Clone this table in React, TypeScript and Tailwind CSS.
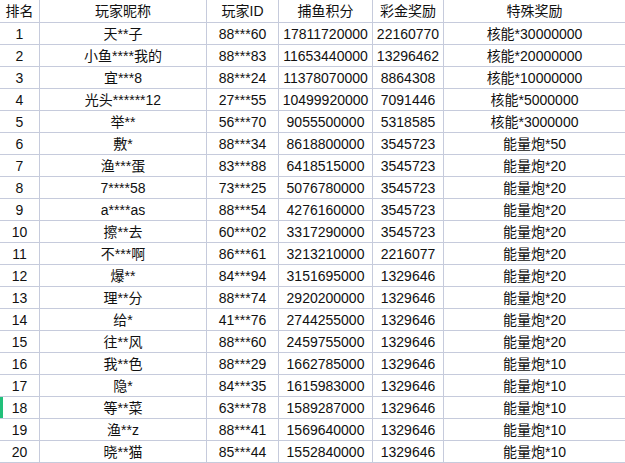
const rows: [string, string, string, string, string, string][] = [
  ['1', '天**子', '88***60', '17811720000', '22160770', '核能*30000000'],
  ['2', '小鱼****我的', '88***83', '11653440000', '13296462', '核能*20000000'],
  ['3', '宜***8', '88***24', '11378070000', '8864308', '核能*10000000'],
  ['4', '光头******12', '27***55', '10499920000', '7091446', '核能*5000000'],
  ['5', '举**', '56***70', '9055500000', '5318585', '核能*3000000'],
  ['6', '敷*', '88***34', '8618800000', '3545723', '能量炮*50'],
  ['7', '渔***蛋', '83***88', '6418515000', '3545723', '能量炮*20'],
  ['8', '7****58', '73***25', '5076780000', '3545723', '能量炮*20'],
  ['9', 'a****as', '88***54', '4276160000', '3545723', '能量炮*20'],
  ['10', '擦**去', '60***02', '3317290000', '3545723', '能量炮*20'],
  ['11', '不***啊', '86***61', '3213210000', '2216077', '能量炮*20'],
  ['12', '爆**', '84***94', '3151695000', '1329646', '能量炮*20'],
  ['13', '理**分', '88***74', '2920200000', '1329646', '能量炮*20'],
  ['14', '给*', '41***76', '2744255000', '1329646', '能量炮*20'],
  ['15', '往**风', '88***60', '2459755000', '1329646', '能量炮*20'],
  ['16', '我**色', '88***29', '1662785000', '1329646', '能量炮*10'],
  ['17', '隐*', '84***35', '1615983000', '1329646', '能量炮*10'],
  ['18', '等**菜', '63***78', '1589287000', '1329646', '能量炮*10'],
  ['19', '渔**z', '88***41', '1569640000', '1329646', '能量炮*10'],
  ['20', '晓**猫', '85***44', '1552840000', '1329646', '能量炮*10'],
];

const headers = ['排名', '玩家昵称', '玩家ID', '捕鱼积分', '彩金奖励', '特殊奖励'];

function Cell({ text, last, head, mark }: { text: string; last?: boolean; head?: boolean; mark?: boolean }) {
  return (
    <div
      className={`relative flex items-center justify-center border-b border-[#c6cbdc] ${last ? '' : 'border-r'} ${head ? 'h-[23px]' : 'h-[22px]'}`}
    >
      {mark && <div className="absolute left-0 top-0 h-[21px] w-[3px] bg-[#21c07a]" />}
      <span className="whitespace-nowrap leading-none">{text}</span>
    </div>
  );
}

export default function App() {
  return (
    <div className="w-[625px] h-[463px] overflow-hidden bg-white text-[14px] text-[#111] font-['Liberation_Sans','Noto_Sans_CJK_SC',sans-serif]">
      <div className="grid grid-cols-[40px_167px_72px_94px_71px_1fr]">
        {headers.map((h, i) => (
          <Cell key={h} text={h} head last={i === 5} />
        ))}
        {rows.map((r) =>
          r.map((c, i) => <Cell key={r[0] + '-' + i} text={c} last={i === 5} mark={i === 0 && r[0] === '18'} />)
        )}
      </div>
    </div>
  );
}
